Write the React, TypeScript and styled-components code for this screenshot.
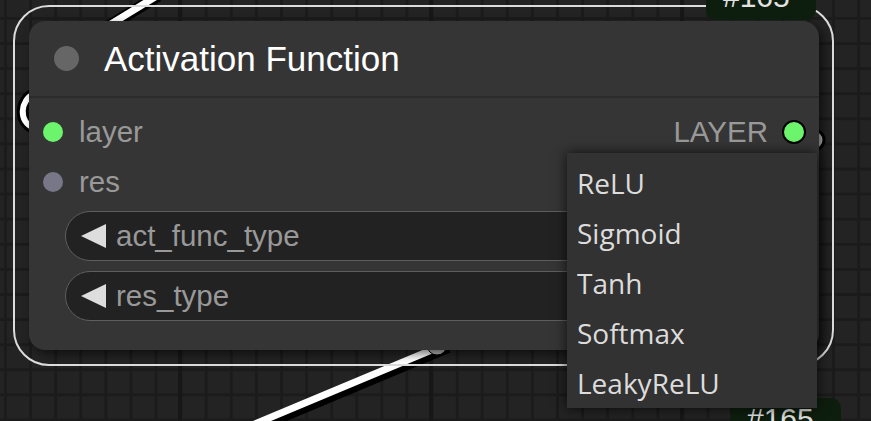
import React from "react";
import styled, { createGlobalStyle } from "styled-components";

const GlobalStyle = createGlobalStyle`
  html, body { margin: 0; padding: 0; background: #222; overflow: hidden; }
  #root { width: 871px; height: 421px; }
`;

const Canvas = styled.div`
  position: relative;
  width: 871px;
  height: 421px;
  overflow: hidden;
  background-color: #232323;
  background-image:
    linear-gradient(90deg, #171717 0 4px, transparent 4px),
    linear-gradient(90deg, #1b1b1b 0 3px, transparent 3px),
    linear-gradient(180deg, #1b1b1b 0 3px, transparent 3px);
  background-size: 251px 100%, 25.1px 100%, 100% 25.1px;
  background-position: 178px 0, 4px 0, 0 17px;
`;

const Wires = styled.svg`
  position: absolute;
  left: 0;
  top: 0;
  width: 871px;
  height: 421px;
`;

const SelectionOutline = styled.div`
  position: absolute;
  left: 13px;
  top: 5px;
  width: 821px;
  height: 361px;
  box-sizing: border-box;
  border: 2px solid #dcdcdc;
  border-radius: 36px;
`;

const Node = styled.div`
  position: absolute;
  left: 29px;
  top: 21px;
  width: 790px;
  height: 329px;
  background: #353535;
  border-radius: 16px;
  box-shadow: 4px 4px 10px rgba(0, 0, 0, 0.55);
  display: flex;
  flex-direction: column;
  font-family: "Liberation Sans", Arial, sans-serif;
`;

const TitleBar = styled.div`
  height: 75px;
  flex: none;
  display: flex;
  align-items: center;
  gap: 25.5px;
  padding-left: 24.5px;
  border-bottom: 2px solid #2b2b2b;
`;

const TitleDot = styled.span`
  width: 25px;
  height: 25px;
  border-radius: 50%;
  background: #666;
  flex: none;
`;

const Title = styled.span`
  font-size: 35px;
  color: #fff;
  line-height: 1;
`;

const Body = styled.div`
  display: flex;
  flex-direction: column;
  padding-top: 9px;
`;

const SlotRow = styled.div`
  height: 50px;
  display: flex;
  align-items: center;
  justify-content: space-between;
  padding: 0 13px 0 14px;
`;

const Slot = styled.div<{ $gap: number }>`
  display: flex;
  align-items: center;
  gap: ${(p) => p.$gap}px;
`;

const SlotDot = styled.span<{ $color: string; $outlined?: boolean }>`
  width: 20px;
  height: 20px;
  border-radius: 50%;
  background: ${(p) => p.$color};
  border: ${(p) => (p.$outlined ? "2px solid #000" : "none")};
  flex: none;
`;

const SlotLabel = styled.span`
  font-size: 29.5px;
  color: #999;
  line-height: 1;
`;

const Widgets = styled.div`
  display: flex;
  flex-direction: column;
  gap: 10px;
  margin-top: 4px;
  padding: 0 36px;
`;

const WidgetPill = styled.div`
  height: 50px;
  box-sizing: border-box;
  border: 1.5px solid #5e5e5e;
  border-radius: 25px;
  background: #222;
  display: flex;
  align-items: center;
  padding: 0 15px 0 15px;
  gap: 10px;
`;

const WidgetLabel = styled.span`
  font-size: 29.5px;
  color: #999;
  line-height: 1;
  flex: 1;
`;

const Badge = styled.div<{ $left: number; $top: number; $w: number; $h: number; $pt: number }>`
  position: absolute;
  left: ${(p) => p.$left}px;
  top: ${(p) => p.$top}px;
  width: ${(p) => p.$w}px;
  height: ${(p) => p.$h}px;
  box-sizing: border-box;
  padding: ${(p) => p.$pt}px 0 0 17px;
  background: #0e1e0e;
  border-radius: 10px;
  font-family: "Liberation Sans", Arial, sans-serif;
  font-size: 30px;
  line-height: 30px;
  color: #e2e2e2;
`;

const Menu = styled.div`
  position: absolute;
  left: 567px;
  top: 153px;
  width: 250px;
  height: 255px;
  box-sizing: border-box;
  padding-top: 5px;
  background: #323232;
  box-shadow: 0 0 12px rgba(0, 0, 0, 0.75);
  display: flex;
  flex-direction: column;
  font-family: "Open Sans", "Noto Sans", sans-serif;
`;

const MenuItem = styled.div`
  height: 50px;
  display: flex;
  align-items: center;
  padding-left: 10px;
  font-size: 28px;
  color: #dcdcdc;
`;

const Arrow = ({ dir }: { dir: "left" | "right" }) => (
  <svg width="25" height="24" viewBox="0 0 25 24" style={{ flex: "none" }}>
    {dir === "left" ? (
      <polygon points="0,12 25,0 25,24" fill="#ddd" />
    ) : (
      <polygon points="25,12 0,0 0,24" fill="#ddd" />
    )}
  </svg>
);

const widgets = ["act_func_type", "res_type"];

const menuItems = ["ReLU", "Sigmoid", "Tanh", "Softmax", "LeakyReLU"];

export default function App() {
  return (
    <>
      <GlobalStyle />
      <Canvas>
        <Wires viewBox="0 0 871 421">
          {/* top wire */}
          <line x1="106" y1="27" x2="160" y2="-6" stroke="#000" strokeWidth="12" transform="translate(-2,2)" />
          <line x1="106" y1="27" x2="160" y2="-6" stroke="#fff" strokeWidth="7" />
          {/* left loop */}
          <path d="M 34 94 C 20 100, 18 122, 34 128" fill="none" stroke="#000" strokeWidth="12" />
          <path d="M 34 94 C 20 100, 18 122, 34 128" fill="none" stroke="#fff" strokeWidth="6" />
          {/* bottom wire */}
          <line x1="250" y1="426" x2="446" y2="344" stroke="#000" strokeWidth="12" transform="translate(2,3)" />
          <line x1="250" y1="426" x2="446" y2="344" stroke="#fff" strokeWidth="7" />
          <circle cx="437" cy="345" r="10" fill="#bbb" stroke="#000" strokeWidth="1" />
          {/* right output wire end */}
          <circle cx="814" cy="140" r="10" fill="#c8c8c8" stroke="#000" strokeWidth="3" />
        </Wires>
        <SelectionOutline />
        <Node>
          <TitleBar>
            <TitleDot />
            <Title>Activation Function</Title>
          </TitleBar>
          <Body>
            <SlotRow>
              <Slot $gap={16}>
                <SlotDot $color="#6cf56c" />
                <SlotLabel>layer</SlotLabel>
              </Slot>
              <Slot $gap={14}>
                <SlotLabel>LAYER</SlotLabel>
                <SlotDot $color="#6cf56c" $outlined />
              </Slot>
            </SlotRow>
            <SlotRow>
              <Slot $gap={16}>
                <SlotDot $color="#777788" />
                <SlotLabel>res</SlotLabel>
              </Slot>
            </SlotRow>
            <Widgets>
              {widgets.map((w) => (
                <WidgetPill key={w}>
                  <Arrow dir="left" />
                  <WidgetLabel>{w}</WidgetLabel>
                  <Arrow dir="right" />
                </WidgetPill>
              ))}
            </Widgets>
          </Body>
        </Node>
        <Badge $left={706} $top={-30} $w={110} $h={50} $pt={12}>#165</Badge>
        <Badge $left={730} $top={398} $w={111} $h={40} $pt={6}>#165</Badge>
        <Menu>
          {menuItems.map((m) => (
            <MenuItem key={m}>{m}</MenuItem>
          ))}
        </Menu>
      </Canvas>
    </>
  );
}
